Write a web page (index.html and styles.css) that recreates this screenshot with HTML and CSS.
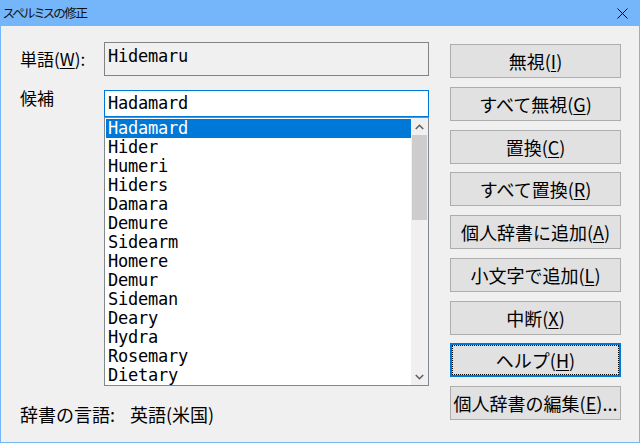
FILE: index.html
```html
<!DOCTYPE html>
<html lang="ja">
<head>
<meta charset="utf-8">
<link rel="stylesheet" href="styles.css">
</head>
<body>
<div class="window">
  <div class="titlebar">
    <span class="title">スペルミスの修正</span>
    <svg class="close" width="11" height="11" viewBox="0 0 11 11"><path d="M0.5 0.5 L10.5 10.5 M10.5 0.5 L0.5 10.5" stroke="#000" stroke-width="1" fill="none"/></svg>
  </div>
  <div class="body">
    <div class="left">
      <div class="form">
        <div class="label l1">単語(<u>W</u>):</div>
        <div class="readonly mono">Hidemaru</div>
        <div class="label l2">候補</div>
        <div class="combo">
          <div class="input mono">Hadamard</div>
          <div class="list">
            <div class="items mono">
              <div class="item sel">Hadamard</div>
              <div class="item">Hider</div>
              <div class="item">Humeri</div>
              <div class="item">Hiders</div>
              <div class="item">Damara</div>
              <div class="item">Demure</div>
              <div class="item">Sidearm</div>
              <div class="item">Homere</div>
              <div class="item">Demur</div>
              <div class="item">Sideman</div>
              <div class="item">Deary</div>
              <div class="item">Hydra</div>
              <div class="item">Rosemary</div>
              <div class="item">Dietary</div>
            </div>
            <div class="scrollbar">
              <div class="arrow"><svg width="9" height="6" viewBox="0 0 9 6"><path d="M0.8 5 L4.5 1.3 L8.2 5" stroke="#606060" stroke-width="1.6" fill="none"/></svg></div>
              <div class="thumb"></div>
              <div class="track"></div>
              <div class="arrow"><svg width="9" height="6" viewBox="0 0 9 6"><path d="M0.8 1 L4.5 4.7 L8.2 1" stroke="#606060" stroke-width="1.6" fill="none"/></svg></div>
            </div>
          </div>
        </div>
      </div>
      <div class="lang"><span class="lang-label">辞書の言語:</span><span>英語(米国)</span></div>
    </div>
    <div class="buttons">
      <div class="btn">無視(<u>I</u>)</div>
      <div class="btn">すべて無視(<u>G</u>)</div>
      <div class="btn">置換(<u>C</u>)</div>
      <div class="btn">すべて置換(<u>R</u>)</div>
      <div class="btn">個人辞書に追加(<u>A</u>)</div>
      <div class="btn">小文字で追加(<u>L</u>)</div>
      <div class="btn">中断(<u>X</u>)</div>
      <div class="btn focus">ヘルプ(<u>H</u>)</div>
      <div class="btn">個人辞書の編集(<u>E</u>)...</div>
    </div>
  </div>
</div>
</body>
</html>
```
FILE: styles.css
```css
* { box-sizing: border-box; }
html, body { margin: 0; padding: 0; }
body {
  width: 640px;
  height: 443px;
  overflow: hidden;
  font-family: "Noto Sans CJK JP", "Noto Sans", sans-serif;
  font-size: 17px;
  color: #000;
}
.window {
  width: 640px;
  height: 443px;
  display: flex;
  flex-direction: column;
  background: #f0f0f0;
}
.titlebar {
  height: 26px;
  background: #74b6f9;
  display: flex;
  align-items: center;
  padding-left: 3px;
  padding-right: 12px;
  justify-content: space-between;
}
.title {
  font-size: 12.5px;
  line-height: 16px;
  font-feature-settings: "palt";
  letter-spacing: -1.2px;
  color: #111;
}
.close { display: block; margin-top: 1px; }
.body {
  flex: 1;
  display: flex;
  border: 1px solid #74b6f9;
  border-top: none;
  padding-left: 19px;
}
.left {
  display: flex;
  flex-direction: column;
  padding-top: 16px;
}
.form {
  display: grid;
  grid-template-columns: 84px 325px;
  row-gap: 14px;
  align-items: start;
}
.label {
  line-height: 20px;
  white-space: nowrap;
}
.label u, .btn u { text-underline-offset: 2px; text-decoration-thickness: 1px; }
.l1 { margin-top: 7px; }
.l2 { margin-top: -2px; }
.mono {
  font-family: "DejaVu Sans Mono", "Liberation Mono", monospace;
  font-size: 17px;
  letter-spacing: -0.23px;
}
.readonly {
  height: 34px;
  border: 1px solid #838383;
  background: #f0f0f0;
  padding: 4px 0 0 3px;
  line-height: 19px;
}
.combo { display: flex; flex-direction: column; }
.input {
  height: 27px;
  border: 1px solid #0078d7;
  background: #fff;
  padding: 3px 0 0 3px;
  line-height: 19px;
}
.list {
  height: 269px;
  border: 1px solid #828790;
  background: #fff;
  display: flex;
}
.items {
  flex: 1;
  padding: 1px 0 0 1px;
}
.item {
  height: 19px;
  line-height: 19px;
  padding-left: 2px;
  white-space: nowrap;
}
.item.sel { background: #0078d7; color: #fff; }
.scrollbar {
  width: 17px;
  background: #f0f0f0;
  display: flex;
  flex-direction: column;
}
.arrow {
  height: 17px;
  display: flex;
  align-items: center;
  justify-content: center;
}
.arrow svg { display: block; }
.thumb {
  height: 85px;
  margin: 0 1px;
  background: #cdcdcd;
}
.track { flex: 1; }
.lang {
  margin-top: 17px;
  line-height: 22px;
  font-size: 18px;
  display: flex;
}
.lang-label { width: 110px; }
.buttons {
  margin-left: 21px;
  padding-top: 18px;
  display: flex;
  flex-direction: column;
  gap: 8.75px;
}
.btn {
  width: 171px;
  height: 34px;
  background: #e1e1e1;
  border: 1px solid #adadad;
  display: flex;
  align-items: center;
  justify-content: center;
  white-space: nowrap;
  font-size: 18px;
  line-height: 22px;
}
.btn.focus {
  border: 2px solid #0078d7;
  outline: 1px dotted #000;
  outline-offset: -3px;
}
```
